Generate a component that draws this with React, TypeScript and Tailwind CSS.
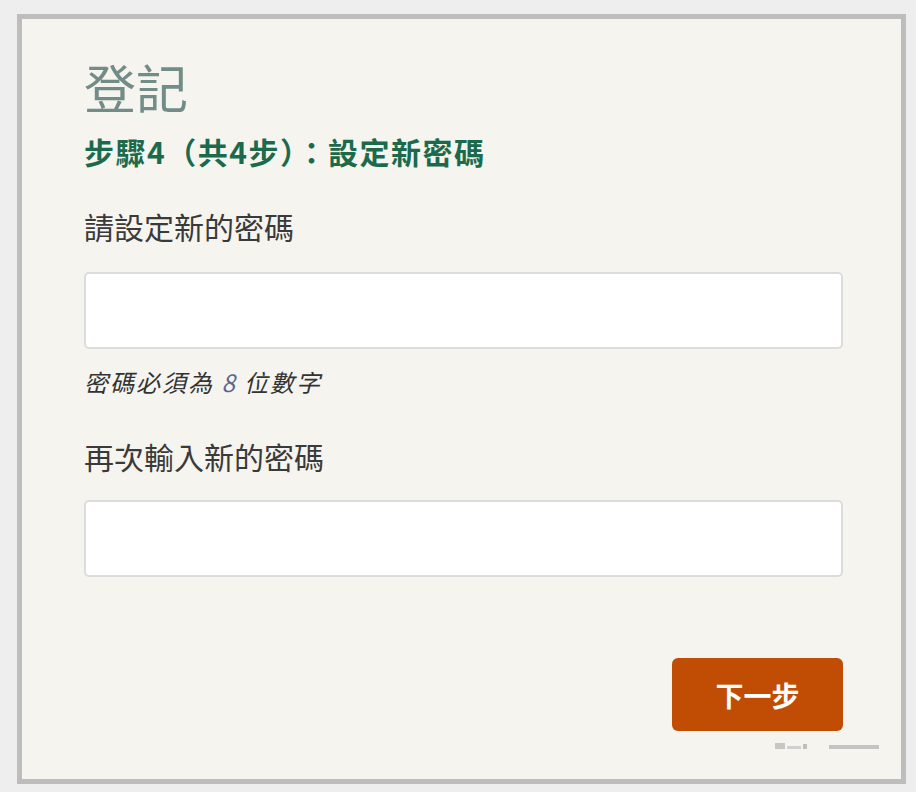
export default function App() {
  const font = { fontFamily: '"Noto Sans CJK TC", "Noto Sans", sans-serif' };

  return (
    <div className="min-h-[792px] w-[916px] bg-[#eeeeee] pt-[14px] pl-[17px]" style={font}>
      <div className="relative h-[770px] w-[889px] border-[5px] border-[#bdbdbd] bg-[#f5f4ef] pl-[62px] pr-[58px] pt-[42px]">
        <h1 className="text-[52px] leading-[52px] font-normal text-[#728c88]">登記</h1>

        <h2 className="mt-[23px] text-[30px] leading-[30px] font-bold tracking-[1.5px] text-[#1c6a4c]">
          步驟4（共4步）：設定新密碼
        </h2>

        <label className="mt-[45px] block text-[30px] leading-[30px] text-[#3a3a3a]">
          請設定新的密碼
        </label>
        <input
          type="password"
          className="mt-[31px] block h-[77px] w-full rounded-[5px] border-2 border-[#dcdcdc] bg-white px-4 text-lg outline-none"
        />

        <p className="mt-[21px] text-[24px] leading-[24px] italic tracking-[2px] text-[#333333]">
          密碼必須為 <span className="text-[#5b6791]">8</span> 位數字
        </p>

        <label className="mt-[47px] block text-[30px] leading-[30px] text-[#3a3a3a]">
          再次輸入新的密碼
        </label>
        <input
          type="password"
          className="mt-[29px] block h-[77px] w-full rounded-[5px] border-2 border-[#dcdcdc] bg-white px-4 text-lg outline-none"
        />

        <div className="mt-[81px] flex justify-end">
          <button
            type="button"
            className="h-[73px] w-[171px] rounded-[6px] bg-[#c14c03] text-[28px] font-bold text-white"
          >
            下一步
          </button>
        </div>

        {/* faint watermark in the corner */}
        <div className="absolute bottom-[30px] right-[22px] flex items-end gap-[22px] opacity-70">
          <div className="flex items-end gap-[2px]">
            <span className="h-[6px] w-[10px] bg-[#b5b5b5]" />
            <span className="h-[3px] w-[14px] bg-[#c2c2c2]" />
            <span className="h-[5px] w-[4px] bg-[#a9a9a9]" />
          </div>
          <span className="h-[4px] w-[50px] bg-[#b0b0b0]" />
        </div>
      </div>
    </div>
  );
}
